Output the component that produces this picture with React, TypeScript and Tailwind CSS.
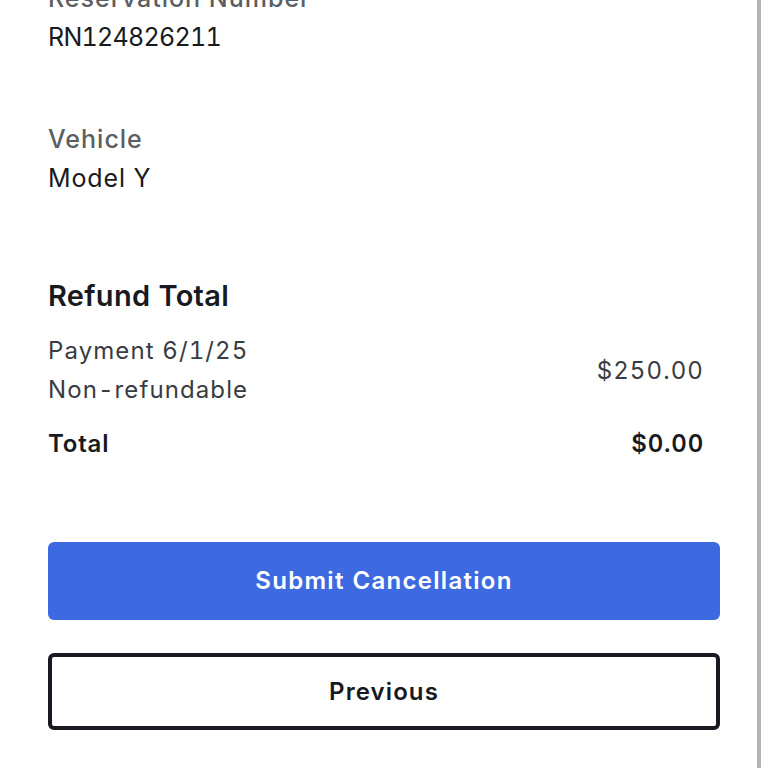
import React from "react";

export default function App() {
  return (
    <div
      className="w-[768px] h-[768px] bg-white overflow-hidden flex text-[#171a20]"
      style={{ fontFamily: "Inter, 'Noto Sans', sans-serif" }}
    >
      <div className="w-[757px] flex flex-col pl-[48px] pr-[37px] -mt-[21px] tabular-nums">
        <div className="flex flex-col">
          <div className="text-[25px] leading-[39px] font-medium tracking-[1px] text-[#5c5e62]">Reservation Number</div>
          <div className="text-[25px] leading-[39px] tracking-[-0.7px]">RN124826211</div>
        </div>
        <div className="flex flex-col mt-[63px]">
          <div className="text-[25px] leading-[39px] font-medium tracking-[1px] text-[#5c5e62]">Vehicle</div>
          <div className="text-[25px] leading-[39px] tracking-[0.9px]">Model Y</div>
        </div>
        <div className="mt-[78px] text-[29px] leading-[40px] font-semibold tracking-[0.3px]">Refund Total</div>
        <div className="mt-[15px] flex items-center justify-between pr-[16px] text-[24px] tracking-[1.1px] text-[#393c41]">
          <div className="flex flex-col">
            <div className="leading-[39px]">Payment 6/1/25</div>
            <div className="leading-[39px]">Non-refundable</div>
          </div>
          <div className="leading-[39px]">$250.00</div>
        </div>
        <div className="mt-[15px] flex items-center justify-between pr-[16px] text-[24px] font-semibold leading-[39px] tracking-[0.8px]">
          <div>Total</div>
          <div>$0.00</div>
        </div>
        <button className="mt-[79px] h-[78px] w-full rounded-[6px] bg-[#3e6ae1] text-white text-[24px] font-semibold tracking-[1.3px] flex items-center justify-center">
          Submit Cancellation
        </button>
        <button className="mt-[33px] h-[77px] w-full rounded-[6px] border-[4px] border-[#171a20] bg-white text-[#171a20] text-[24px] font-semibold tracking-[1.1px] flex items-center justify-center">
          Previous
        </button>
      </div>
      <div className="w-[4px] h-full bg-[#b4b4b4]" />
      <div className="flex-1 h-full bg-white" />
    </div>
  );
}
